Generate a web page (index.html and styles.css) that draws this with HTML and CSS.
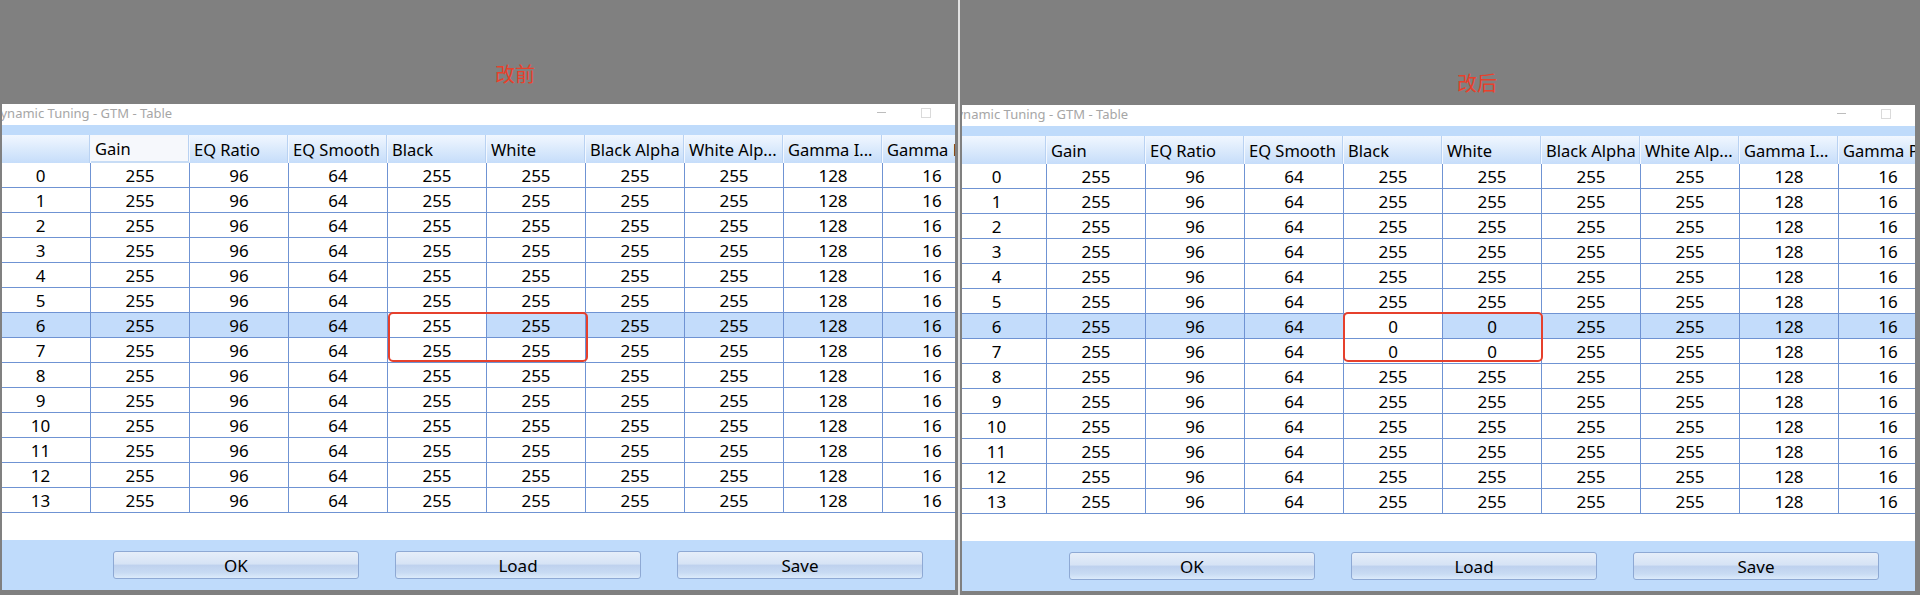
FILE: index.html
```html
<!DOCTYPE html>
<html lang="zh-CN">
<head>
  <meta charset="UTF-8" />
  <title>GTM Table - 改前 / 改后</title>
  <link rel="stylesheet" href="styles.css">
</head>
<body>
  <div class="compare">

    <!-- Before the fix -->
    <section class="shot before">
      <div class="caption"><span class="tag">改前</span></div>
      <div class="window">
        <div class="inner">
          <div class="titlebar">
            <span class="title">Dynamic Tuning - GTM - Table</span>
            <span class="ctl-min"></span>
            <span class="ctl-max"></span>
          </div>
          <div class="strip"></div>
          <div class="grid-wrap">
            <div class="grid" data-hot="1"></div>
            <div class="mark"></div>
          </div>
          <div class="filler"></div>
          <div class="actions">
            <button class="button">OK</button>
            <button class="button">Load</button>
            <button class="button">Save</button>
          </div>
        </div>
      </div>
    </section>

    <div class="divider"></div>

    <!-- After the fix -->
    <section class="shot after">
      <div class="caption"><span class="tag">改后</span></div>
      <div class="window">
        <div class="inner">
          <div class="titlebar">
            <span class="title">Dynamic Tuning - GTM - Table</span>
            <span class="ctl-min"></span>
            <span class="ctl-max"></span>
          </div>
          <div class="strip"></div>
          <div class="grid-wrap">
            <div class="grid" data-fix="0"></div>
            <div class="mark"></div>
          </div>
          <div class="filler"></div>
          <div class="actions">
            <button class="button">OK</button>
            <button class="button">Load</button>
            <button class="button">Save</button>
          </div>
        </div>
      </div>
    </section>

  </div>

  <script>
  const heads = ['', 'Gain', 'EQ Ratio', 'EQ Smooth', 'Black', 'White', 'Black Alpha', 'White Alp...', 'Gamma I...', 'Gamma P...'];
  const base = [255, 96, 64, 255, 255, 255, 255, 128, 16];
  const SELECTED = 6;

  // Build header + 14 rows for each table
  document.querySelectorAll('.grid').forEach(grid => {
    const fix = grid.dataset.fix;

    heads.forEach((text, i) => {
      const h = document.createElement('div');
      h.className = 'hcell' + (i === 1 && grid.dataset.hot ? ' hot' : '');
      h.textContent = text;
      grid.appendChild(h);
    });

    for (let r = 0; r < 14; r++) {
      const vals = base.slice();
      if (fix !== undefined && (r === 6 || r === 7)) {
        vals[3] = fix; // Black
        vals[4] = fix; // White
      }
      const cells = [r].concat(vals);
      cells.forEach((v, i) => {
        const c = document.createElement('div');
        c.className = 'cell';
        if (r === SELECTED) c.classList.add('sel');
        if (r === SELECTED && i === 4) c.classList.add('cur');
        c.textContent = v;
        grid.appendChild(c);
      });
    }
  });
  </script>
</body>
</html>
```

FILE: styles.css
```css
* {
  box-sizing: border-box;
  margin: 0;
  padding: 0;
}

body {
  background: #808080;
  font-family: "Noto Sans", "Open Sans", sans-serif;
  color: #000;
  overflow: hidden;
}

.compare {
  display: flex;
  height: 595px;
}

.shot {
  display: flex;
  flex-direction: column;
  flex-shrink: 0;
  min-width: 0;
  padding: 0 3px 5px 2px;
}

.shot.before {
  width: 958px;
}

.shot.after {
  width: 960px;
  padding-right: 5px;
  padding-bottom: 4px;
}

.divider {
  width: 2px;
  flex-shrink: 0;
  background: #e2e2e2;
}

/* red note above each window */
.caption {
  height: 104px;
  flex-shrink: 0;
  padding: 64px 0 0 493px;
}

.after .caption {
  height: 105px;
  padding: 73px 0 0 495px;
}

.tag {
  font: 20px/20px "Noto Sans CJK SC", sans-serif;
  color: #e8412c;
}

.window {
  flex: 1;
  min-width: 0;
  background: #fff;
  overflow: hidden;
}

.inner {
  margin-left: -11px;
  height: 100%;
  display: flex;
  flex-direction: column;
}

.after .inner {
  margin-left: -15px;
}

.titlebar {
  height: 21px;
  padding-bottom: 4px;
  display: flex;
  align-items: center;
  flex-shrink: 0;
}

.title {
  flex: 1;
  font-size: 13px;
  color: #a6a6a6;
  white-space: nowrap;
}

.ctl-min {
  width: 9px;
  height: 1px;
  background: #bdbdbd;
  margin-right: 35px;
}

.ctl-max {
  width: 10px;
  height: 10px;
  border: 1px solid #dadada;
  margin-right: 24px;
}

.strip {
  height: 10px;
  background: #bfdbfb;
  flex-shrink: 0;
}

/* data grid */
.grid-wrap {
  position: relative;
  flex-shrink: 0;
}

.grid {
  display: grid;
  grid-template-columns: 100px repeat(9, 99px);
  grid-template-rows: 28px repeat(14, 25px);
}

.hcell {
  display: flex;
  align-items: center;
  padding-left: 4px;
  font-size: 16.5px;
  white-space: nowrap;
  overflow: hidden;
  background: linear-gradient(#f1f7ff, #dbeafc 50%, #c6ddfa);
  border-right: 1px solid #f3f8ff;
  box-shadow: inset -2px 0 0 -1px #b9d2f2;
}

.hcell.hot {
  background: #f6f8fc;
  border-bottom: 2px solid #c7dcf5;
}

.cell {
  display: flex;
  align-items: center;
  justify-content: center;
  font-size: 17px;
  background: #fff;
  border-right: 1px solid #6f93d3;
  border-bottom: 1px solid #6f93d3;
}

.cell.sel {
  background: #c3dcfb;
}

.cell.sel.cur {
  background: #fff;
}

/* highlight round the Black / White cells of rows 6-7 */
.mark {
  position: absolute;
  top: 177px;
  left: 397px;
  width: 200px;
  height: 50px;
  border: 2px solid #e6402c;
  border-radius: 5px;
}

.after .mark {
  top: 176px;
  left: 396px;
}

.filler {
  flex: 1;
}

.actions {
  height: 50px;
  flex-shrink: 0;
  display: flex;
  gap: 36px;
  padding: 11px 0 0 122px;
  background: #bfdbfb;
}

.button {
  width: 246px;
  height: 28px;
  border: 1px solid #8ea9d4;
  border-radius: 3px;
  background: linear-gradient(#e6eef9, #d6e3f5 45%, #bed1ee 52%, #c8dbf3 80%, #dcebfb);
  font-family: "Noto Sans", sans-serif;
  font-size: 17px;
  color: #000;
  flex-shrink: 0;
}
```
